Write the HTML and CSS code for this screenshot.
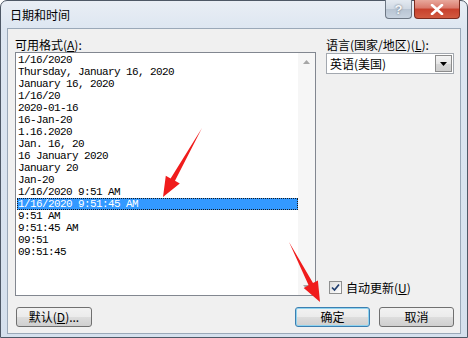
FILE: index.html
```html
<!DOCTYPE html>
<html>
<head>
<meta charset="utf-8">
<link rel="stylesheet" href="styles.css">
</head>
<body>
<div class="window">
  <div class="titlebar">
    <span class="title">日期和时间</span>
    <div class="caption">
      <div class="cap-btn help">?</div>
      <div class="cap-btn close">
        <svg width="14" height="11" viewBox="0 0 14 11"><path d="M2 1 L12 10 M12 1 L2 10" stroke="#fff" stroke-width="2.6" stroke-linecap="round"/></svg>
      </div>
    </div>
  </div>
  <div class="content">
    <div class="top">
      <div class="left-col">
        <div class="label">可用格式(<u>A</u>):</div>
        <div class="listbox">
          <div class="list">
            <div class="item">1/16/2020</div>
            <div class="item">Thursday, January 16, 2020</div>
            <div class="item">January 16, 2020</div>
            <div class="item">1/16/20</div>
            <div class="item">2020-01-16</div>
            <div class="item">16-Jan-20</div>
            <div class="item">1.16.2020</div>
            <div class="item">Jan. 16, 20</div>
            <div class="item">16 January 2020</div>
            <div class="item">January 20</div>
            <div class="item">Jan-20</div>
            <div class="item">1/16/2020 9:51 AM</div>
            <div class="item selected">1/16/2020 9:51:45 AM</div>
            <div class="item">9:51 AM</div>
            <div class="item">9:51:45 AM</div>
            <div class="item">09:51</div>
            <div class="item">09:51:45</div>
          </div>
          <div class="scrollbar">
            <div class="sb-btn"><svg width="7" height="4" viewBox="0 0 7 4"><path d="M0 4 L3.5 0 L7 4 Z" fill="#a6a6a6"/></svg></div>
            <div class="sb-btn"><svg width="7" height="4" viewBox="0 0 7 4"><path d="M0 0 L3.5 4 L7 0 Z" fill="#a6a6a6"/></svg></div>
          </div>
        </div>
      </div>
      <div class="right-col">
        <div class="label">语言(国家/地区)(<u>L</u>):</div>
        <div class="combo">
          <span class="combo-text">英语(美国)</span>
          <div class="combo-btn"><svg width="7" height="4" viewBox="0 0 7 4"><path d="M0 0 L3.5 4 L7 0 Z" fill="#000"/></svg></div>
        </div>
        <div class="check-row">
          <div class="checkbox"><svg width="9" height="9" viewBox="0 0 9 9"><path d="M1 4.5 L3.5 7 L8 1.5" stroke="#1f3d6e" stroke-width="1.7" fill="none"/></svg></div>
          <span>自动更新(<u>U</u>)</span>
        </div>
      </div>
    </div>
    <div class="buttons">
      <div class="btn btn-default">默认(<u>D</u>)...</div>
      <div class="btn btn-ok">确定</div>
      <div class="btn btn-cancel">取消</div>
    </div>
  </div>
</div>
<svg class="arrows" width="468" height="338" viewBox="0 0 468 338">
  <polygon points="202,128 175,180.8 179.8,183.5 163,197 165.8,175.7 170.6,178.4" fill="#f01c1c"/>
  <polygon points="289,242 313,283.1 317.9,280.5 320,302 303.7,287.9 308.6,285.3" fill="#f01c1c"/>
</svg>
</body>
</html>
```

FILE: styles.css
```css
* { box-sizing: border-box; }
html, body { margin: 0; padding: 0; }
body {
  width: 468px;
  height: 338px;
  overflow: hidden;
  position: relative;
  background: #ffffff;
  font-family: "Noto Sans CJK SC", "Noto Sans", sans-serif;
  font-size: 12px;
  color: #000;
}
u { text-decoration: underline; }

.window {
  width: 468px;
  height: 338px;
  border: 1px solid #4e5866;
  border-radius: 7px 7px 0 0;
  background: linear-gradient(#e9eef5, #dde6f1 28px, #d5e0ed);
  display: flex;
  flex-direction: column;
}

.titlebar {
  height: 27px;
  flex: none;
  display: flex;
  align-items: flex-start;
  padding-left: 9px;
}
.title {
  line-height: 27px;
  font-size: 12px;
}
.caption {
  margin-left: auto;
  margin-right: 7px;
  margin-top: -1px;
  display: flex;
  gap: 2px;
}
.cap-btn {
  height: 19px;
  border: 1px solid #6d7784;
  border-top: none;
  border-radius: 0 0 4px 4px;
  display: flex;
  align-items: center;
  justify-content: center;
}
.help {
  width: 27px;
  background: linear-gradient(#e4eaf1, #cfd8e3 50%, #b8c4d2 51%, #c8d3e0);
  color: #f4f6f8;
  font-family: "Liberation Sans", sans-serif;
  font-weight: bold;
  font-size: 13px;
  text-shadow: 0 0 2px #55606e;
}
.close {
  width: 46px;
  border-color: #7a2a1e;
  background: linear-gradient(#e8a89c, #d9786a 45%, #c7402c 50%, #d15a40);
}

.content {
  flex: 1;
  margin: 0 6px 3px 6px;
  border: 1px solid #9aa8b8;
  background: #f0f0f0;
  padding: 8px 6px 6px 7px;
  display: flex;
  flex-direction: column;
}

.top {
  display: flex;
  gap: 10px;
}
.left-col {
  width: 301px;
  display: flex;
  flex-direction: column;
}
.right-col {
  width: 128px;
  display: flex;
  flex-direction: column;
}
.label {
  height: 15px;
  line-height: 15px;
  white-space: nowrap;
}

.listbox {
  height: 244px;
  border: 1px solid #828790;
  background: #fff;
  display: flex;
}
.list {
  flex: 1;
  padding: 1px 0 0 1px;
  font-family: "Liberation Mono", monospace;
  font-size: 11px;
  letter-spacing: -0.6px;
}
.item {
  height: 12px;
  line-height: 12px;
  padding-left: 1px;
  white-space: nowrap;
  overflow: hidden;
}
.item.selected {
  background: #3399ff;
  color: #fff;
  outline: 1px dotted #1a1a1a;
  outline-offset: -1px;
}
.scrollbar {
  width: 17px;
  background: #f6f6f6;
  display: flex;
  flex-direction: column;
  justify-content: space-between;
}
.sb-btn {
  height: 17px;
  display: flex;
  align-items: center;
  justify-content: center;
}

.combo {
  margin-top: 1px;
  height: 21px;
  border: 1px solid #a3a8af;
  background: #fff;
  display: flex;
  align-items: center;
}
.combo-text {
  flex: 1;
  padding-left: 3px;
  line-height: 19px;
}
.combo-btn {
  width: 17px;
  height: 17px;
  margin-right: 1px;
  border: 1px solid #8c8c8c;
  background: linear-gradient(#f4f4f4, #e6e6e6 50%, #d6d6d6 51%, #cdcdcd);
  display: flex;
  align-items: center;
  justify-content: center;
}

.check-row {
  margin-top: auto;
  margin-bottom: 2px;
  padding-left: 3px;
  display: flex;
  align-items: center;
  gap: 4px;
  height: 14px;
  white-space: nowrap;
}
.checkbox {
  width: 13px;
  height: 13px;
  border: 1px solid #8e8f8f;
  background: linear-gradient(135deg, #dcdcdc, #ffffff);
  display: flex;
  align-items: center;
  justify-content: center;
}

.buttons {
  margin-top: 11px;
  height: 20px;
  display: flex;
  gap: 9px;
}
.btn {
  width: 75px;
  height: 20px;
  border: 1px solid #707070;
  border-radius: 3px;
  background: linear-gradient(#f2f2f2, #ebebeb 50%, #dddddd 51%, #cfcfcf);
  display: flex;
  align-items: center;
  justify-content: center;
  line-height: 18px;
  white-space: nowrap;
}
.btn-default {
  width: 76px;
  margin-left: 1px;
}
.btn-ok {
  margin-left: auto;
  border-color: #3c7fb1;
  box-shadow: inset 0 0 0 1px #8fd3ef;
}

.arrows {
  position: absolute;
  left: 0;
  top: 0;
  pointer-events: none;
}
```
